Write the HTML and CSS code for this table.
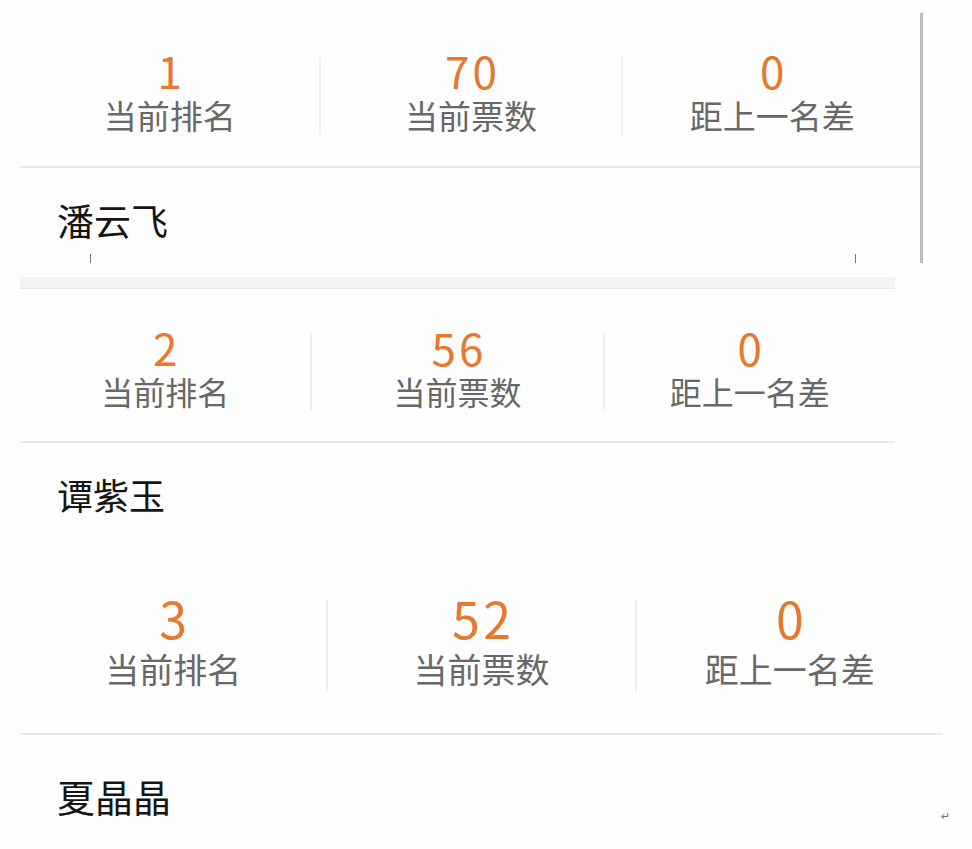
FILE: index.html
```html
<!DOCTYPE html>
<html lang="zh">
<head>
<meta charset="utf-8">
<title>投票排名</title>
<link rel="stylesheet" href="styles.css">
</head>
<body>
<div class="doc">
  <section class="panel p1">
    <div class="stats">
      <div class="col"><div class="num">1</div><div class="lbl">当前排名</div></div>
      <div class="col"><div class="num">70</div><div class="lbl">当前票数</div></div>
      <div class="col"><div class="num">0</div><div class="lbl">距上一名差</div></div>
    </div>
    <div class="rule"></div>
    <div class="name">潘云飞</div>
    <div class="ticks"><span class="tick"></span><span class="tick"></span></div>
    <span class="scrollbar"></span>
  </section>

  <section class="panel p2">
    <div class="strip"></div>
    <div class="stats">
      <div class="col"><div class="num">2</div><div class="lbl">当前排名</div></div>
      <div class="col"><div class="num">56</div><div class="lbl">当前票数</div></div>
      <div class="col"><div class="num">0</div><div class="lbl">距上一名差</div></div>
    </div>
    <div class="rule"></div>
    <div class="name">谭紫玉</div>
  </section>

  <section class="panel p3">
    <div class="stats">
      <div class="col"><div class="num">3</div><div class="lbl">当前排名</div></div>
      <div class="col"><div class="num">52</div><div class="lbl">当前票数</div></div>
      <div class="col"><div class="num">0</div><div class="lbl">距上一名差</div></div>
    </div>
    <div class="rule"></div>
    <div class="name">夏晶晶<span class="ret">↵</span></div>
  </section>
</div>
</body>
</html>
```

FILE: styles.css
```css
html, body {
  margin: 0;
  padding: 0;
  background: #fefefe;
}
body {
  font-family: "Noto Sans CJK SC", "Noto Sans", sans-serif;
}
.doc {
  padding-left: 20px;
  display: flex;
  flex-direction: column;
}
.panel {
  position: relative;
}
.stats {
  display: flex;
}
.col {
  flex: 1;
  display: flex;
  flex-direction: column;
  align-items: center;
  border-right: 2px solid #f0f0f0;
}
.col:last-child {
  border-right: none;
}
.num {
  color: #e8782e;
  letter-spacing: 0.07em;
  text-indent: 0.07em;
}
.lbl {
  color: #686868;
}
.rule {
  height: 2px;
  background: #e9e9e9;
}
.name {
  color: #151515;
  padding-left: 37px;
}

/* panel 1 */
.p1 {
  width: 902px;
  height: 263px;
}
.p1 .stats {
  margin-top: 57px;
}
.p1 .col {
  height: 78px;
}
.p1 .num {
  font-size: 44px;
  line-height: 26px;
}
.p1 .lbl {
  font-size: 33px;
  line-height: 40px;
  margin-top: 12px;
}
.p1 .rule {
  margin-top: 31px;
}
.p1 .name {
  font-size: 37px;
  line-height: 44px;
  margin-top: 30px;
}
.ticks {
  display: flex;
  justify-content: space-between;
  padding: 12px 66px 0 70px;
}
.tick {
  width: 1px;
  height: 9px;
  background: #777;
}
.scrollbar {
  position: absolute;
  right: -1px;
  top: 13px;
  bottom: 0;
  width: 3px;
  background: #bdbdbd;
}

/* panel 2 */
.p2 {
  width: 875px;
  margin-top: 14px;
}
.strip {
  height: 11px;
  background: #f3f3f3;
  border-bottom: 1px solid #e8e8e8;
}
.p2 .stats {
  margin-top: 44px;
}
.p2 .col {
  height: 77px;
}
.p2 .num {
  font-size: 44px;
  line-height: 28px;
}
.p2 .lbl {
  font-size: 32px;
  line-height: 40px;
  margin-top: 10px;
}
.p2 .rule {
  margin-top: 31px;
}
.p2 .name {
  font-size: 36px;
  line-height: 44px;
  margin-top: 29px;
}

/* panel 3 */
.p3 {
  width: 923px;
  margin-top: 84px;
}
.p3 .col {
  height: 92px;
}
.p3 .num {
  font-size: 50px;
  line-height: 35px;
}
.p3 .lbl {
  font-size: 34px;
  line-height: 46px;
  margin-top: 11px;
}
.p3 .rule {
  margin-top: 41px;
}
.p3 .name {
  font-size: 38px;
  line-height: 46px;
  margin-top: 38px;
  position: relative;
}
.ret {
  position: absolute;
  left: 921px;
  top: 38px;
  font-family: "DejaVu Sans", sans-serif;
  font-size: 11px;
  line-height: 12px;
  color: #777;
}
```
